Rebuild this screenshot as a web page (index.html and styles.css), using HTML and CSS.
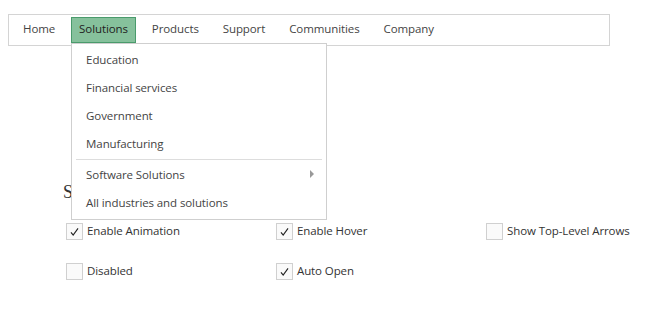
FILE: index.html
```html
<!DOCTYPE html>
<html lang="en">
<head>
    <meta charset="UTF-8">
    <title>Menu - Settings</title>
    <link rel="stylesheet" href="styles.css">
</head>
<body>
<nav class="menu">
    <ul class="menu-bar">
        <li class="menu-item">Home</li>
        <li class="menu-item active">
            Solutions
            <ul class="submenu">
                <li class="sub-item">Education</li>
                <li class="sub-item">Financial services</li>
                <li class="sub-item">Government</li>
                <li class="sub-item">Manufacturing</li>
                <li class="separator"></li>
                <li class="sub-item has-children">Software Solutions <span class="arrow"></span></li>
                <li class="sub-item">All industries and solutions</li>
            </ul>
        </li>
        <li class="menu-item">Products</li>
        <li class="menu-item">Support</li>
        <li class="menu-item">Communities</li>
        <li class="menu-item">Company</li>
    </ul>
</nav>

<div class="settings">
    <h3>Settings</h3>
    <div class="options">
        <label class="option"><span class="box checked"><svg viewBox="0 0 17 17"><path d="M4.5 9.5 L7 12.5 L12.5 5"/></svg></span>Enable Animation</label>
        <label class="option"><span class="box checked"><svg viewBox="0 0 17 17"><path d="M4.5 9.5 L7 12.5 L12.5 5"/></svg></span>Enable Hover</label>
        <label class="option"><span class="box"></span>Show Top-Level Arrows</label>
        <label class="option"><span class="box"></span>Disabled</label>
        <label class="option"><span class="box checked"><svg viewBox="0 0 17 17"><path d="M4.5 9.5 L7 12.5 L12.5 5"/></svg></span>Auto Open</label>
    </div>
</div>
</body>
</html>
```

FILE: styles.css
```css
body {
    margin: 8px;
    font-family: "Open Sans", "Noto Sans", sans-serif;
    font-size: 11.5px;
    letter-spacing: -0.1px;
    color: #333;
    background: #fff;
}
ul { list-style: none; margin: 0; padding: 0; }

.menu { margin-top: 6px; width: 602px; }
.menu-bar {
    display: flex; gap: 8px;
    border: 1px solid #d4d4d4;
    padding: 2px 6px 2px 5px;
}
.menu-item {
    position: relative;
    height: 24px; line-height: 22px;
    padding: 0 7px;
    border: 1px solid transparent;
    color: #444;
}
.menu-item:first-child { padding-left: 8px; }
.menu-item.active {
    background: #86c19c;
    border-color: #4a9b6c;
    color: #222;
}

.submenu {
    position: absolute; left: -1px; top: 25px;
    width: 254px;
    background: #fff;
    border: 1px solid #cfcfcf;
    padding: 1px 0 3px;
    z-index: 10;
}
.sub-item {
    height: 28px; line-height: 27px;
    padding: 0 12px 0 14px;
    color: #444;
    display: flex; justify-content: space-between; align-items: center;
}
.separator { height: 1px; background: #ddd; margin: 2px 4px 0 4px; }
.arrow {
    width: 0; height: 0;
    border-left: 4px solid #999;
    border-top: 4px solid transparent;
    border-bottom: 4px solid transparent;
}

.settings { margin: 136px 0 0 55px; }
.settings h3 {
    margin: 0;
    font-family: "Liberation Serif", serif;
    font-weight: normal;
    font-size: 18px;
    letter-spacing: 0;
    line-height: 21px;
}
.options {
    display: grid;
    grid-template-columns: repeat(3, 210px);
    row-gap: 23px;
    margin: 20px 0 0 3px;
}
.option { display: flex; align-items: flex-start; gap: 4px; height: 17px; line-height: 15px; color: #333; }
.box {
    flex: none;
    width: 15px; height: 15px;
    border: 1px solid #d0d0d0;
    background: #fafafa;
    display: flex;
}
.box svg { width: 15px; height: 15px; }
.box path { fill: none; stroke: #222; stroke-width: 1.3; }
```
